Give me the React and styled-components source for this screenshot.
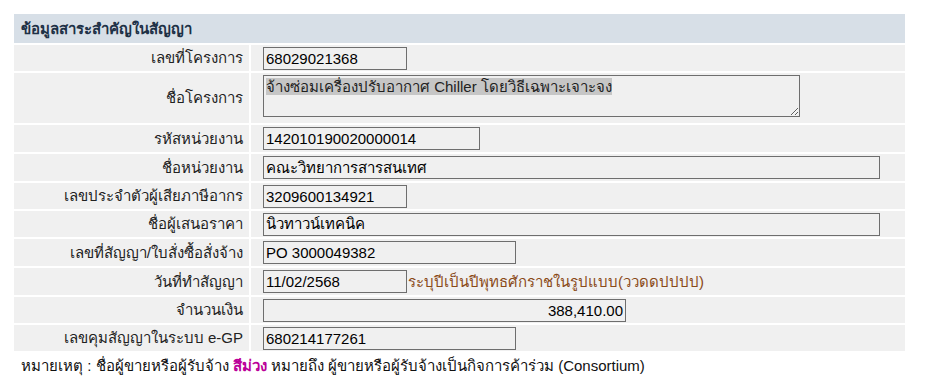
import React from "react";
import styled, { createGlobalStyle } from "styled-components";

const Global = createGlobalStyle`
  body {
    margin: 0;
    background: #fff;
    font-family: "Liberation Sans", Arial, sans-serif;
    font-size: 15px;
    color: #1a1a1a;
  }
`;

const Page = styled.div`
  padding: 14px 29px 0 14px;
`;

const Table = styled.div`
  display: grid;
  grid-template-columns: 235px 1fr;
  column-gap: 2px;
  row-gap: 2px;
  background: #fff;
`;

const Header = styled.div`
  grid-column: 1 / -1;
  background: #d7dfe7;
  color: #1e3146;
  font-weight: bold;
  height: 29px;
  display: flex;
  align-items: center;
  padding-left: 7px;
`;

const Label = styled.div`
  background: #f0f0f0;
  min-height: ${(p) => p.h || 26}px;
  display: flex;
  align-items: center;
  justify-content: flex-end;
  padding-right: 6px;
  color: #222;
`;

const Value = styled.div`
  background: #f0f0f0;
  min-height: ${(p) => p.h || 26}px;
  display: flex;
  align-items: ${(p) => (p.top ? "flex-start" : "center")};
  padding-left: 12px;
  padding-top: ${(p) => (p.top ? 2 : 0)}px;
  box-sizing: border-box;
`;

const Field = styled.div`
  width: ${(p) => p.w}px;
  height: 23px;
  box-sizing: border-box;
  border: 1px solid #6e6e6e;
  background: #f0f0f0;
  display: flex;
  align-items: center;
  justify-content: ${(p) => (p.right ? "flex-end" : "flex-start")};
  padding: 0 2px;
  color: #000;
  white-space: nowrap;
  overflow: hidden;
`;

const Area = styled.div`
  width: 537px;
  height: 42px;
  box-sizing: border-box;
  border: 1px solid #6e6e6e;
  background: #f0f0f0;
  padding: 2px 2px;
  color: #222;
  resize: both;
  overflow: hidden;
  line-height: 17px;
`;

const Marked = styled.span`
  background: #c6c6c6;
`;

const Hint = styled.span`
  color: #8a4a18;
  margin-left: 1px;
`;

const Note = styled.div`
  padding: 3px 0 0 7px;
  color: #111;
`;

const Purple = styled.span`
  color: #bb0099;
  font-weight: bold;
`;

const rows = [
  { label: "เลขที่โครงการ", value: "68029021368", w: 144 },
  { label: "ชื่อโครงการ", area: "จ้างซ่อมเครื่องปรับอากาศ Chiller โดยวิธีเฉพาะเจาะจง", h: 50 },
  { label: "รหัสหน่วยงาน", value: "142010190020000014", w: 217, h: 27 },
  { label: "ชื่อหน่วยงาน", value: "คณะวิทยาการสารสนเทศ", w: 617, h: 27 },
  { label: "เลขประจำตัวผู้เสียภาษีอากร", value: "3209600134921", w: 144 },
  { label: "ชื่อผู้เสนอราคา", value: "นิวทาวน์เทคนิค", w: 617 },
  { label: "เลขที่สัญญา/ใบสั่งซื้อสั่งจ้าง", value: "PO 3000049382", w: 253, h: 27 },
  { label: "วันที่ทำสัญญา", value: "11/02/2568", w: 144, hint: "ระบุปีเป็นปีพุทธศักราชในรูปแบบ(ววดดปปปป)", h: 27 },
  { label: "จำนวนเงิน", value: "388,410.00", w: 363, right: true },
  { label: "เลขคุมสัญญาในระบบ e-GP", value: "680214177261", w: 253 },
];

export default function App() {
  return (
    <Page>
      <Global />
      <Table>
        <Header>ข้อมูลสาระสำคัญในสัญญา</Header>
        {rows.map((r) => (
          <React.Fragment key={r.label}>
            <Label h={r.h}>{r.label}</Label>
            <Value h={r.h} top={!!r.area}>
              {r.area ? (
                <Area>
                  <Marked>{r.area}</Marked>
                </Area>
              ) : (
                <>
                  <Field w={r.w} right={r.right}>
                    {r.value}
                  </Field>
                  {r.hint && <Hint>{r.hint}</Hint>}
                </>
              )}
            </Value>
          </React.Fragment>
        ))}
      </Table>
      <Note>
        หมายเหตุ : ชื่อผู้ขายหรือผู้รับจ้าง <Purple>สีม่วง</Purple> หมายถึง
        ผู้ขายหรือผู้รับจ้างเป็นกิจการค้าร่วม (Consortium)
      </Note>
    </Page>
  );
}
